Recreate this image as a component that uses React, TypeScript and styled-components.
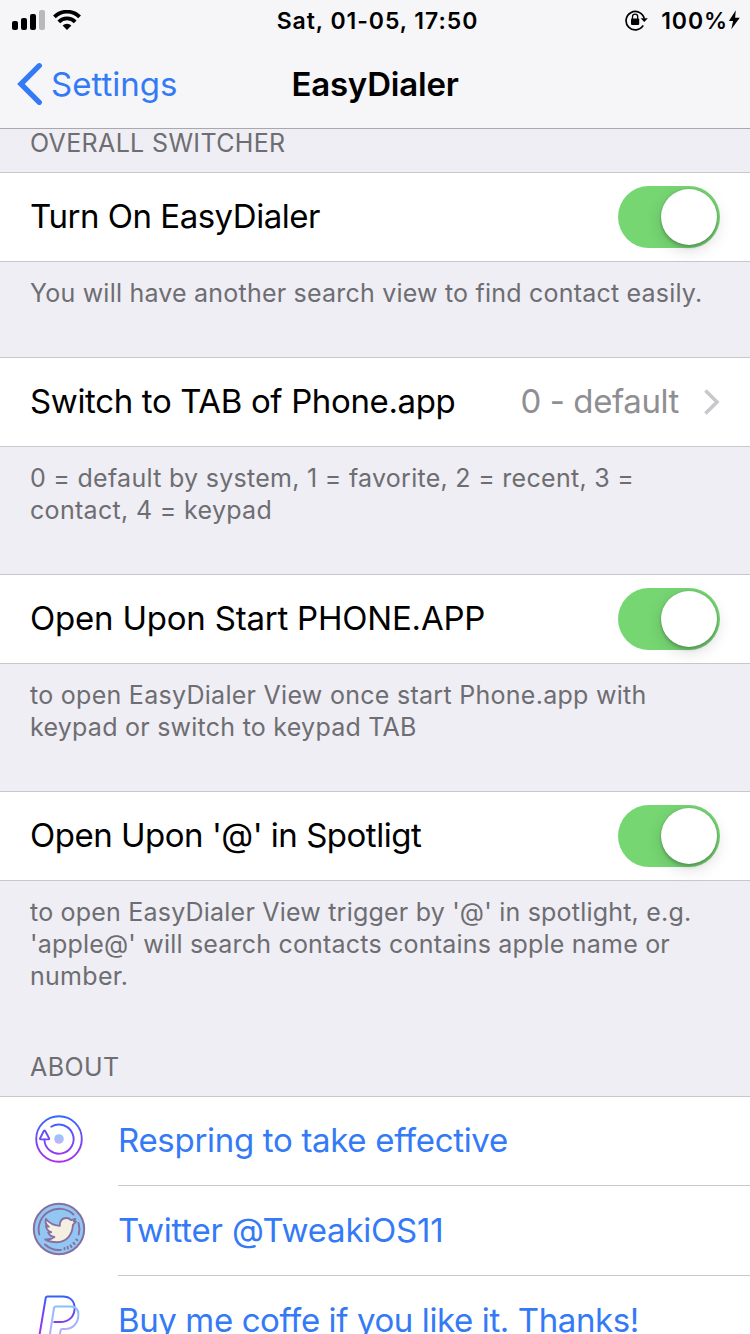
import React from 'react';
import styled, { createGlobalStyle } from 'styled-components';

const GlobalStyle = createGlobalStyle`
  *, *::before, *::after { box-sizing: border-box; }
  html, body { margin: 0; padding: 0; background: #efeef4; }
  body { overflow: hidden; }
`;

const Screen = styled.div`
  width: 750px;
  height: 1334px;
  overflow: hidden;
  display: flex;
  flex-direction: column;
  background: #efeef4;
  color: #000;
  font-family: Inter, "Liberation Sans", sans-serif;
`;

const Header = styled.header`
  flex: none;
  height: 129px;
  background: #f6f6f8;
  border-bottom: 1px solid #a9a9ac;
`;

const StatusBar = styled.div`
  height: 40px;
  display: grid;
  grid-template-columns: 1fr auto 1fr;
  align-items: center;
  padding: 0 10px 0 12px;
`;

const StatusGroup = styled.div<{ $end?: boolean }>`
  display: flex;
  align-items: center;
  justify-content: ${p => (p.$end ? 'flex-end' : 'flex-start')};
`;

const NavBar = styled.div`
  height: 88px;
  display: grid;
  grid-template-columns: 1fr auto 1fr;
  align-items: center;
  padding: 0 17px;
`;

const BackLink = styled.a`
  display: flex;
  align-items: center;
  gap: 8px;
  color: #347af6;
`;

const Text = styled.span<{ $size: number; $track?: number; $weight?: number }>`
  font-size: ${p => p.$size}px;
  font-weight: ${p => p.$weight ?? 400};
  letter-spacing: ${p => p.$track ?? 0}px;
  white-space: nowrap;
`;

const RowLabel = styled(Text)`
  padding-bottom: 2px;
`;

const ClockText = styled(Text)`
  padding: 2px 0 0 3px;
`;

const BatteryText = styled(Text)`
  padding-top: 2px;
  margin-left: 12px;
`;

const SectionTitle = styled.h2<{ $top: number }>`
  flex: none;
  margin: 0;
  padding: ${p => p.$top}px 30px 15px;
  font-size: 25px;
  font-weight: 400;
  line-height: 28px;
  color: #6d6d72;
`;

const Row = styled.div`
  flex: none;
  height: 90px;
  display: flex;
  align-items: center;
  justify-content: space-between;
  padding: 0 30px;
  background: #fff;
  border-top: 1px solid #c8c7cc;
  border-bottom: 1px solid #c8c7cc;
`;

const ValueGroup = styled.div`
  display: flex;
  align-items: center;
  gap: 25px;
  color: #8e8e93;
`;

const Footnote = styled.p<{ $height: number }>`
  flex: none;
  height: ${p => p.$height}px;
  margin: 0;
  padding: 15px 30px 0;
  display: flex;
  flex-direction: column;
  line-height: 32px;
  color: #6d6d72;
`;

const Toggle = styled.div`
  width: 102px;
  height: 62px;
  padding: 3px;
  display: flex;
  justify-content: flex-end;
  border-radius: 31px;
  background: #76d672;
`;

const Knob = styled.div`
  width: 56px;
  height: 56px;
  border-radius: 50%;
  background: #fff;
  box-shadow: 0 5px 16px rgba(0, 0, 0, 0.15), 0 3px 3px rgba(0, 0, 0, 0.16), 0 0 2px rgba(0, 0, 0, 0.2);
`;

const LinkList = styled.div`
  flex: none;
  background: #fff;
  border-top: 1px solid #c8c7cc;
`;

const LinkRow = styled.a`
  display: flex;
  height: 90px;
  color: #347af6;
  &:first-child { height: 89px; }
`;

const LinkIcon = styled.div`
  width: 118px;
  padding: 0 0 5px 30px;
  display: flex;
  align-items: center;
`;

const LinkBody = styled.div`
  flex: 1;
  display: flex;
  align-items: center;
  border-bottom: 1px solid #c8c7cc;
`;

const SignalIcon = () => (
  <svg width="34" height="20" viewBox="0 0 34 20">
    <rect x="0" y="11" width="6" height="9" rx="2" />
    <rect x="9" y="8" width="6" height="12" rx="2" />
    <rect x="18" y="4" width="6" height="16" rx="2" />
    <rect x="27" y="0" width="6" height="20" rx="2" fill="#b9b9bb" />
  </svg>
);

const WifiGlyph = styled.svg`
  margin-left: 7px;
`;

const WifiIcon = () => (
  <WifiGlyph width="28" height="20" viewBox="0 0 28 20">
    <g fill="none" stroke="#000" strokeWidth="3.8">
      <path d="M1.400 6.900a17.800 17.800 0 0 1 25.200 0" />
      <path d="M5.800 11.900a11.500 11.500 0 0 1 16.400 0" />
    </g>
    <path d="M9.600 15.500a6.200 6.200 0 0 1 8.800 0L14 19.900z" />
  </WifiGlyph>
);

const LockIcon = () => (
  <svg width="24" height="22" viewBox="0 0 24 22">
    <path d="M18.200 16.400A9.200 9.200 0 1 1 19.200 9.500" fill="none" stroke="#000" strokeWidth="1.700" />
    <path d="M15.700 9.200h7.100L19.300 13z" />
    <rect x="6" y="9.500" width="8.200" height="6.400" rx="0.800" />
    <path d="M7.500 10V7.800a2.600 2.600 0 0 1 5.200 0V10" fill="none" stroke="#000" strokeWidth="1.300" />
  </svg>
);

const BoltIcon = () => (
  <svg width="12" height="20" viewBox="0 0 12 20">
    <path d="M7.800.3.9 11h4.200L3.300 19.200 11.800 7.800H7.100z" />
  </svg>
);

const BackChevron = () => (
  <svg width="26" height="44" viewBox="0 0 26 44">
    <path d="M22.300 3.700 3.900 22l18.400 18.300" fill="none" stroke="#347af6" strokeWidth="5.300" strokeLinecap="round" />
  </svg>
);

const Chevron = () => (
  <svg width="16" height="26" viewBox="0 0 16 26">
    <path d="M1.400 1.400 13 13 1.400 24.600" fill="none" stroke="#c7c7cc" strokeWidth="3.600" />
  </svg>
);

const RespringIcon = () => (
  <svg width="58" height="58" viewBox="0 0 58 58">
    <defs>
      <linearGradient id="ring" x1="0" y1="5" x2="0" y2="53" gradientUnits="userSpaceOnUse">
        <stop offset="0" stopColor="#2f6bff" />
        <stop offset="1" stopColor="#b02bf0" />
      </linearGradient>
      <linearGradient id="dot" x1="0" y1="24" x2="0" y2="34" gradientUnits="userSpaceOnUse">
        <stop offset="0" stopColor="#8fc8fa" />
        <stop offset="1" stopColor="#c8b0fa" />
      </linearGradient>
    </defs>
    <g fill="none" stroke="url(#ring)" strokeWidth="1.900" strokeLinejoin="round" strokeLinecap="round">
      <circle cx="29" cy="29" r="22.800" />
      <path d="M21.200 16.800A14.600 14.600 0 1 1 14.400 29.500" />
      <path d="M15.200 21 19.100 28.200q.5 1.200-.6 1.200h-7.800q-1.100 0-.6-1.200L13.800 21q.7-1.100 1.400 0z" />
    </g>
    <circle cx="29" cy="29" r="4.800" fill="url(#dot)" />
  </svg>
);

const TwitterIcon = () => (
  <svg width="58" height="58" viewBox="0 0 58 58">
    <circle cx="29" cy="29" r="25.200" fill="#92c7f3" stroke="#86709f" strokeWidth="2" />
    <g fill="none" stroke="#86709f" strokeWidth="1.900" strokeLinecap="round">
      <path d="M9.300 34.500A20.600 20.600 0 0 1 43.500 14.500" />
      <path d="M48.500 23a20.600 20.600 0 0 1 .2 11.500" />
      <path d="M15 44.500A20.800 20.800 0 0 0 31 49.900" />
      <path d="M34.500 49.200v-1.200M38 48.600l-.5-1.800M41.500 46.900l-1-1.700M44.600 44l-1.200-1.200M47.400 40.200l-1.200-.8" />
    </g>
    <path d="M16 19c3.500 4.600 8.200 6.400 13.700 6.900C29.600 21 32 18 36.200 18c2.200 0 3.800.9 4.900 2.100l4.200-1.300-1.500 2.700 2.200.2-3.100 3.100C42.700 34.500 36.500 42 27 42.200c-5 0-9-1-11.800-2.800 3.500.3 7-.6 9.200-2.400-3-.5-5.300-2-6.200-4.500l3-.3c-3-1.200-5-3.400-5.300-6.200l2.900.7C15.700 24.600 14.900 21.700 16 19z" fill="#f5efe2" stroke="#86709f" strokeWidth="1.900" strokeLinejoin="round" />
  </svg>
);

const PayPalIcon = () => (
  <svg width="58" height="58" viewBox="0 0 58 58">
    <defs>
      <linearGradient id="ppBack" x1="0" y1="6" x2="0" y2="44" gradientUnits="userSpaceOnUse">
        <stop offset="0" stopColor="#3562f8" />
        <stop offset="1" stopColor="#a92cec" />
      </linearGradient>
      <linearGradient id="ppFront" x1="0" y1="15" x2="0" y2="54" gradientUnits="userSpaceOnUse">
        <stop offset="0" stopColor="#86c3fb" />
        <stop offset="1" stopColor="#c8a3f8" />
      </linearGradient>
    </defs>
    <g fill="none" strokeWidth="2" strokeLinejoin="round">
      <path d="M23.500 32H30c8.500 0 14.600-5 14.600-14 0-7-4.500-11.500-12-11.500H17.500c-1 0-1.600.5-1.800 1.500L9.500 45h10.400" stroke="url(#ppBack)" />
      <path d="M24 18c.2-1 .8-1.600 1.800-1.600h14.700c5 0 7.900 3 7.900 7.900 0 9-5.500 14.700-13.400 14.700h-2.700q-1.400 0-1.700 1.400l-2 11.600H18.700z" stroke="url(#ppFront)" />
    </g>
  </svg>
);

const Switch = () => <Toggle role="switch" aria-checked="true"><Knob /></Toggle>;

export default function App() {
  return (
    <Screen>
      <GlobalStyle />
      <Header>
        <StatusBar>
          <StatusGroup>
            <SignalIcon />
            <WifiIcon />
          </StatusGroup>
          <ClockText $size={23} $weight={600} $track={0.95}>Sat, 01-05, 17:50</ClockText>
          <StatusGroup $end>
            <LockIcon />
            <BatteryText $size={23} $weight={600} $track={0.9}>100%</BatteryText>
            <BoltIcon />
          </StatusGroup>
        </StatusBar>
        <NavBar>
          <BackLink>
            <BackChevron />
            <Text $size={33}>Settings</Text>
          </BackLink>
          <Text $size={33} $weight={600} $track={-0.2}>EasyDialer</Text>
        </NavBar>
      </Header>

      <SectionTitle $top={0}><Text $size={25} $track={0.35}>OVERALL SWITCHER</Text></SectionTitle>
      <Row>
        <RowLabel $size={33} $track={-0.48}>Turn On EasyDialer</RowLabel>
        <Switch />
      </Row>
      <Footnote $height={95}>
        <Text $size={25} $track={0.21}>You will have another search view to find contact easily.</Text>
      </Footnote>

      <Row>
        <RowLabel $size={33} $track={-0.36}>Switch to TAB of Phone.app</RowLabel>
        <ValueGroup>
          <RowLabel $size={33} $track={-0.4}>0 - default</RowLabel>
          <Chevron />
        </ValueGroup>
      </Row>
      <Footnote $height={127}>
        <Text $size={25} $track={0.28}>0 = default by system, 1 = favorite, 2 = recent, 3 =</Text>
        <Text $size={25} $track={0.32}>contact, 4 = keypad</Text>
      </Footnote>

      <Row>
        <RowLabel $size={33} $track={-0.21}>Open Upon Start PHONE.APP</RowLabel>
        <Switch />
      </Row>
      <Footnote $height={127}>
        <Text $size={25} $track={0.28}>to open EasyDialer View once start Phone.app with</Text>
        <Text $size={25} $track={0.25}>keypad or switch to keypad TAB</Text>
      </Footnote>

      <Row>
        <RowLabel $size={33} $track={-0.49}>Open Upon '@' in Spotligt</RowLabel>
        <Switch />
      </Row>
      <Footnote $height={159}>
        <Text $size={25} $track={0.21}>to open EasyDialer View trigger by '@' in spotlight, e.g.</Text>
        <Text $size={25} $track={0.2}>'apple@' will search contacts contains apple name or</Text>
        <Text $size={25} $track={0.28}>number.</Text>
      </Footnote>

      <SectionTitle $top={13}><Text $size={25} $track={0.4}>ABOUT</Text></SectionTitle>
      <LinkList>
        <LinkRow>
          <LinkIcon><RespringIcon /></LinkIcon>
          <LinkBody><RowLabel $size={33} $track={-0.31}>Respring to take effective</RowLabel></LinkBody>
        </LinkRow>
        <LinkRow>
          <LinkIcon><TwitterIcon /></LinkIcon>
          <LinkBody><RowLabel $size={33} $track={-0.22}>Twitter @TweakiOS11</RowLabel></LinkBody>
        </LinkRow>
        <LinkRow>
          <LinkIcon><PayPalIcon /></LinkIcon>
          <LinkBody><RowLabel $size={33} $track={-0.39}>Buy me coffe if you like it. Thanks!</RowLabel></LinkBody>
        </LinkRow>
      </LinkList>
    </Screen>
  );
}
